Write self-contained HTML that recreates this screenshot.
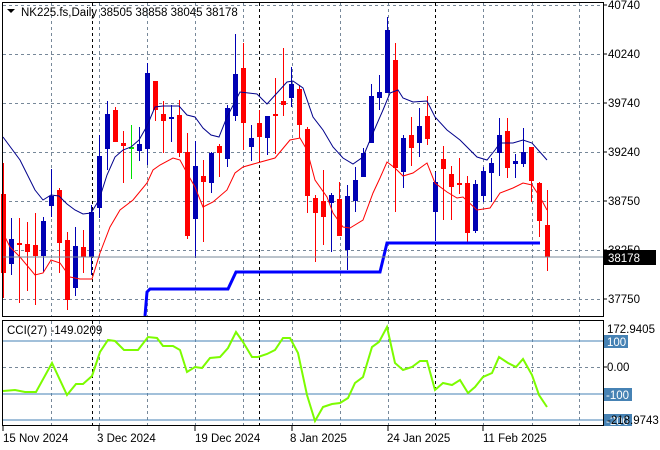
<!DOCTYPE html>
<html><head><meta charset="utf-8"><style>
html,body{margin:0;padding:0;background:#fff;}
svg{display:block;font-family:"Liberation Sans",sans-serif;}
</style></head><body>
<svg id="s" width="660" height="450" xmlns="http://www.w3.org/2000/svg">
<rect width="660" height="450" fill="#fff"/>
<g id="grid" stroke="#778899" stroke-width="1" stroke-dasharray="3,3" fill="none"></g>
<g id="cdl"></g>
<polyline fill="none" stroke="#00008b" stroke-width="1" points="3,137 20,160 35,190 43,200 51,195 59,196 67,204 75,210 83,214 91,213 99,200 107,175 115,157 123,150 131,147 139,140 147,126 155,107 163,106 171,106 179,106 187,115 195,117 203,128 211,135 219,137 227,117 240,92 257,94 267,104 277,93 287,82 293,81 303,88 313,117 323,130 333,147 343,158 353,164 363,157 373,133 383,110 390,93 398,90 403,98 413,102 427,101 435,117 447,130 460,140 477,157 487,160 495,150 500,143 513,143 523,140 532,143 547,160"/>
<polyline fill="none" stroke="#ff0000" stroke-width="1" points="3,233 10,247 20,257 35,275 43,273 51,260 60,263 70,277 80,279 92,279 100,253 110,227 120,210 133,200 147,183 153,170 160,165 173,158 180,160 187,173 195,187 203,207 213,202 227,190 235,173 243,167 257,163 275,158 290,140 300,138 307,150 315,180 327,197 333,213 343,227 350,228 363,220 373,193 380,178 387,162 395,168 403,176 413,173 427,163 435,183 447,192 457,198 463,197 477,210 490,208 500,193 513,188 523,183 532,185 540,197 547,210"/>
<polyline fill="none" stroke="#0000ff" stroke-width="3" points="145,316 147,292 150,289 228,289 236,272 380,272 387,243 540,243"/>
<line x1="3" y1="257" x2="603" y2="257" stroke="#778899" stroke-width="1"/>
<line x1="3" y1="341" x2="603" y2="341" stroke="#4682b4"/>
<line x1="3" y1="394" x2="603" y2="394" stroke="#4682b4"/>
<line x1="3" y1="420" x2="603" y2="420" stroke="#4682b4"/>
<polyline fill="none" stroke="#7cfc00" stroke-width="2" points="3,391 15,390 25,392 36,392 52,363 67,395 76,384 83,384 92,376 100,352 108,340 115,341 124,350 138,350 148,337 157,338 163,346 173,346 180,350 187,372 195,367 202,368 210,358 220,357 228,348 236,332 243,342 252,357 258,357 267,354 275,350 283,338 290,338 298,353 307,395 315,421 323,407 332,404 340,403 348,398 355,383 363,377 372,347 379,342 387,327 395,363 403,370 412,367 420,361 427,361 435,390 443,383 452,385 460,380 468,393 475,387 483,377 492,373 499,357 508,363 516,367 523,359 532,375 539,395 547,407"/>
<rect x="2.5" y="2.5" width="601" height="314" fill="none" stroke="#000"/>
<rect x="2.5" y="320.5" width="601" height="105" fill="none" stroke="#000"/>
<path d="M7,9 L15,9 L11,13 Z" fill="#000"/>
<text x="21" y="16" font-size="11.5" fill="#000">NK225.fs,Daily  38505 38858 38045 38178</text>
<text x="7" y="334" font-size="11.5" fill="#000">CCI(27) -149.0209</text>
<g font-size="11.5" fill="#000">
<text x="608" y="9">40740</text>
<text x="608" y="58">40240</text>
<text x="608" y="107">39740</text>
<text x="608" y="156">39240</text>
<text x="608" y="205">38750</text>
<text x="608" y="254">38250</text>
<text x="608" y="303">37750</text>
<text x="607" y="333">172.9405</text>
<text x="607" y="371">0.00</text>
</g>
<rect x="604" y="250" width="52" height="15" fill="#000"/>
<text x="608" y="262" font-size="11.5" fill="#fff">38178</text>
<rect x="604" y="335" width="24" height="13" fill="#4682b4"/>
<text x="607" y="346" font-size="11.5" fill="#fff">100</text>
<rect x="604" y="388" width="28" height="13" fill="#4682b4"/>
<text x="606" y="399" font-size="11.5" fill="#fff">-100</text>
<rect x="604" y="414" width="28" height="12" fill="#4682b4"/>
<text x="606" y="425" font-size="11.5" fill="#fff">-200</text>
<text x="607" y="424" font-size="11.5" fill="#000">-218.9743</text>
<g stroke="#000"><line x1="603" y1="5" x2="607" y2="5"/><line x1="603" y1="54" x2="607" y2="54"/><line x1="603" y1="103" x2="607" y2="103"/><line x1="603" y1="152" x2="607" y2="152"/><line x1="603" y1="201" x2="607" y2="201"/><line x1="603" y1="250" x2="607" y2="250"/><line x1="603" y1="299" x2="607" y2="299"/><line x1="603" y1="367" x2="607" y2="367"/></g>
<g font-size="11.5" fill="#000">
<text x="3" y="442">15 Nov 2024</text>
<text x="97" y="442">3 Dec 2024</text>
<text x="195" y="442">19 Dec 2024</text>
<text x="290" y="442">8 Jan 2025</text>
<text x="387" y="442">24 Jan 2025</text>
<text x="483" y="442">11 Feb 2025</text>
</g>
<g stroke="#000"><line x1="3" y1="426" x2="3" y2="431"/><line x1="99" y1="426" x2="99" y2="431"/><line x1="195" y1="426" x2="195" y2="431"/><line x1="292" y1="426" x2="292" y2="431"/><line x1="388" y1="426" x2="388" y2="431"/><line x1="483" y1="426" x2="483" y2="431"/></g>
</svg>
<script>
var NS="http://www.w3.org/2000/svg";
function el(p,t,a){var e=document.createElementNS(NS,t);for(var k in a)e.setAttribute(k,a[k]);p.appendChild(e);return e;}
var g=document.getElementById("grid");
[5,54,103,152,201,250,299].forEach(function(y){el(g,"line",{x1:3,y1:y+.5,x2:603,y2:y+.5});});
el(g,"line",{x1:3,y1:367.5,x2:603,y2:367.5});
var vx=[51,99,147,195,243,292,340,388,483,532,579];
vx.forEach(function(x){el(g,"line",{x1:x+.5,y1:3,x2:x+.5,y2:316});el(g,"line",{x1:x+.5,y1:321,x2:x+.5,y2:425});});
[92,259,435].forEach(function(x){el(g,"line",{x1:x+.5,y1:3,x2:x+.5,y2:316,stroke:"#000"});el(g,"line",{x1:x+.5,y1:321,x2:x+.5,y2:425,stroke:"#000"});});
var D=[
[3,"r",163,194,273,298],[11,"b",218,239,264,275],[19,"r",218,243,244,303],[27,"r",222,244,252,291],[35,"r",213,245,256,305],[43,"b",217,221,256,272],[51,"b",169,196,206,217],[59,"r",188,190,243,273],[67,"r",232,240,300,310],[75,"b",227,246,288,296],[83,"r",230,247,257,273],[91,"b",205,212,257,275],[99,"b",135,156,208,218],[107,"b",101,114,149,170],[115,"r",107,110,142,142],[123,"r",131,143,146,183],[131,"g",125,147,148,179],[139,"b",127,144,151,161],[147,"b",63,73,149,165],[155,"r",81,81,110,121],[163,"r",101,114,121,153],[171,"b",105,117,118,142],[179,"r",100,115,153,157],[187,"r",133,152,236,239],[195,"b",141,166,219,258],[203,"r",160,176,182,242],[211,"b",152,153,183,193],[219,"r",144,146,153,177],[227,"b",105,108,159,167],[235,"b",34,74,116,121],[243,"r",43,68,123,150],[251,"b",125,138,147,161],[259,"r",110,123,137,161],[267,"b",116,116,138,155],[275,"r",78,114,116,154],[283,"r",48,101,105,116],[291,"b",67,84,98,107],[299,"r",85,89,125,138],[307,"r",127,129,196,213],[315,"r",195,198,213,262],[323,"r",170,201,217,245],[331,"b",193,195,203,252],[339,"r",182,199,236,236],[347,"b",185,196,250,270],[355,"b",167,180,201,212],[363,"b",148,153,177,177],[371,"b",84,96,143,143],[379,"b",75,92,98,110],[387,"b",17,30,93,93],[395,"r",43,60,168,212],[403,"b",135,138,172,188],[411,"r",117,135,148,166],[419,"b",108,126,143,157],[427,"r",96,116,139,145],[435,"b",172,182,212,241],[443,"r",146,159,169,220],[451,"r",166,174,187,220],[459,"r",158,183,185,194],[467,"r",176,183,233,242],[475,"b",180,184,231,233],[483,"b",167,171,196,202],[491,"b",158,163,173,202],[499,"b",118,135,153,176],[507,"r",118,131,168,178],[515,"b",154,161,164,178],[523,"b",128,152,164,167],[531,"r",147,147,181,202],[539,"r",182,183,221,237],[547,"r",190,225,257,271]];
var c=document.getElementById("cdl");
var col={r:"#ff0000",b:"#0000b4",g:"#00e000"};
D.forEach(function(d){var cl=col[d[1]];el(c,"rect",{x:d[0],y:d[2],width:1,height:d[5]-d[2],fill:cl});var h=Math.max(2,d[4]-d[3]);el(c,"rect",{x:d[0]-2,y:d[3],width:5,height:h,fill:cl});});
</script>
</body></html>
